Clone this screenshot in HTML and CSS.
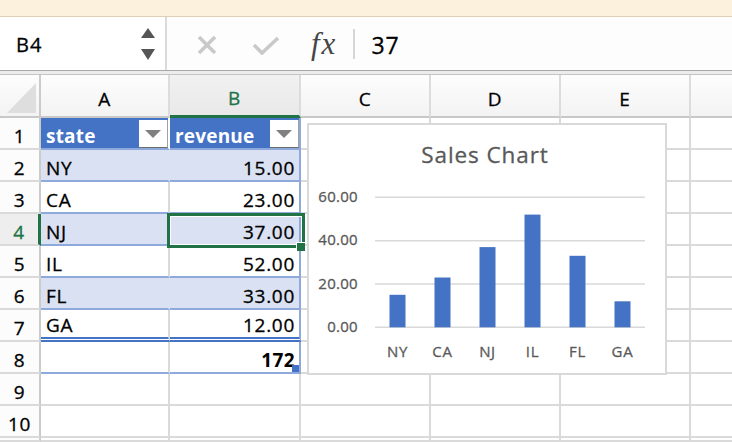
FILE: index.html
```html
<!DOCTYPE html>
<html lang="en">
<head>
    <meta charset="UTF-8">
    <title>Sales - Sheet1</title>
    <link rel="stylesheet" href="styles.css">
</head>
<body>
    <div class="banner"></div>

    <div class="formula-bar">
        <div class="name-box">
            <span class="name">B4</span>
            <svg class="spin" width="16" height="34" viewBox="0 0 16 34">
                <path d="M1 11 L8 1 L15 11 Z" fill="#555"/>
                <path d="M1 22 L15 22 L8 33 Z" fill="#555"/>
            </svg>
        </div>
        <svg class="icon-cancel" width="22" height="20" viewBox="0 0 22 20">
            <path d="M3 2 L19 18 M19 2 L3 18" stroke="#c9c9c9" stroke-width="3.6"/>
        </svg>
        <svg class="icon-enter" width="28" height="19" viewBox="0 0 28 19">
            <path d="M2 9 L10 17 L26 2" fill="none" stroke="#c9c9c9" stroke-width="3.6"/>
        </svg>
        <span class="fx">fx</span>
        <span class="fx-sep"></span>
        <span class="formula">37</span>
    </div>
    <div class="strip"></div>

    <div class="sheet">
        <div class="corner"><span class="corner-mark"></span></div>
        <div class="col-head">A</div>
        <div class="col-head active">B</div>
        <div class="col-head">C</div>
        <div class="col-head">D</div>
        <div class="col-head">E</div>
        <div class="col-head"></div>

        <div class="row-head">1</div>
        <div class="cell th">state<span class="filter"></span></div>
        <div class="cell th last">revenue<span class="filter"></span></div>
        <div class="cell"></div><div class="cell"></div><div class="cell"></div><div class="cell"></div>

        <div class="row-head">2</div>
        <div class="cell tb band">NY</div>
        <div class="cell tb band num last">15.00</div>
        <div class="cell"></div><div class="cell"></div><div class="cell"></div><div class="cell"></div>

        <div class="row-head">3</div>
        <div class="cell tb">CA</div>
        <div class="cell tb num last">23.00</div>
        <div class="cell"></div><div class="cell"></div><div class="cell"></div><div class="cell"></div>

        <div class="row-head active">4</div>
        <div class="cell tb band">NJ</div>
        <div class="cell tb band num last">37.00</div>
        <div class="cell"></div><div class="cell"></div><div class="cell"></div><div class="cell"></div>

        <div class="row-head">5</div>
        <div class="cell tb">IL</div>
        <div class="cell tb num last">52.00</div>
        <div class="cell"></div><div class="cell"></div><div class="cell"></div><div class="cell"></div>

        <div class="row-head">6</div>
        <div class="cell tb band">FL</div>
        <div class="cell tb band num last">33.00</div>
        <div class="cell"></div><div class="cell"></div><div class="cell"></div><div class="cell"></div>

        <div class="row-head">7</div>
        <div class="cell tb end">GA</div>
        <div class="cell tb end num last">12.00</div>
        <div class="cell"></div><div class="cell"></div><div class="cell"></div><div class="cell"></div>

        <div class="row-head">8</div>
        <div class="cell tb"></div>
        <div class="cell tb num last total">172<span class="resize"></span></div>
        <div class="cell"></div><div class="cell"></div><div class="cell"></div><div class="cell"></div>

        <div class="row-head">9</div>
        <div class="cell"></div><div class="cell"></div><div class="cell"></div><div class="cell"></div><div class="cell"></div><div class="cell"></div>

        <div class="row-head">10</div>
        <div class="cell"></div><div class="cell"></div><div class="cell"></div><div class="cell"></div><div class="cell"></div><div class="cell"></div>

        <!-- top edge of row 11 -->
        <div class="row-head"></div>
        <div class="cell"></div><div class="cell"></div><div class="cell"></div><div class="cell"></div><div class="cell"></div><div class="cell"></div>

        <!-- active cell B4 -->
        <div class="selection"></div>
        <div class="fill-handle"></div>

        <!-- floating chart -->
        <div class="chart">
            <svg width="356" height="248" viewBox="2 2 356 248">
                <text class="chart-title" x="178" y="40">Sales Chart</text>

                <g class="grid">
                    <line x1="68" y1="74.3" x2="338" y2="74.3"/>
                    <line x1="68" y1="117.7" x2="338" y2="117.7"/>
                    <line x1="68" y1="161" x2="338" y2="161"/>
                    <line x1="68" y1="204.3" x2="338" y2="204.3"/>
                </g>

                <g class="y-axis">
                    <text x="51" y="79">60.00</text>
                    <text x="51" y="122.4">40.00</text>
                    <text x="51" y="165.7">20.00</text>
                    <text x="51" y="209">0.00</text>
                </g>

                <g class="bars">
                    <rect x="82.5" y="171.8" width="16" height="32.5"/>
                    <rect x="127.5" y="154.5" width="16" height="49.8"/>
                    <rect x="172.5" y="124.1" width="16" height="80.2"/>
                    <rect x="217.5" y="91.6" width="16" height="112.7"/>
                    <rect x="262.5" y="132.8" width="16" height="71.5"/>
                    <rect x="307.5" y="178.3" width="16" height="26"/>
                </g>

                <g class="x-axis">
                    <text x="90.5" y="234">NY</text>
                    <text x="135.5" y="234">CA</text>
                    <text x="180.5" y="234">NJ</text>
                    <text x="225.5" y="234">IL</text>
                    <text x="270.5" y="234">FL</text>
                    <text x="315.5" y="234">GA</text>
                </g>
            </svg>
        </div>
    </div>
</body>
</html>
```

FILE: styles.css
```css
html, body {
    margin: 0;
    width: 732px;
    height: 442px;
    overflow: hidden;
    background: #fff;
    font-family: "Open Sans", "Liberation Sans", sans-serif;
    color: #000;
}

/* window banner */
.banner {
    height: 16px;
    background: #fbf1dd;
    border-bottom: 1px solid #ddd0b4;
}

/* formula bar */
.formula-bar {
    display: flex;
    align-items: center;
    height: 53px;
    background: #fdfdfd;
    border-bottom: 1px solid #a8a8a8;
}

.name-box {
    display: flex;
    align-items: center;
    box-sizing: border-box;
    width: 167px;
    height: 100%;
    padding: 0 9px 0 16px;
    background: #fff;
    border-right: 2px solid #dadada;
}

.name {
    flex: 1;
    font-size: 20px;
    letter-spacing: 1px;
    padding-top: 2px;
    -webkit-text-stroke: 0.3px #000;
}

.spin {
    margin-top: 1px;
}

.icon-cancel {
    margin-left: 29px;
    margin-top: 3px;
}

.icon-enter {
    margin-left: 34px;
    margin-top: 3px;
}

.fx {
    margin-left: 31px;
    font-family: "Liberation Serif", "DejaVu Serif", serif;
    font-style: italic;
    font-size: 31px;
    color: #454545;
    letter-spacing: 2px;
}

.fx-sep {
    width: 2px;
    height: 30px;
    margin-left: 16px;
    background: #d6d6d6;
}

.formula {
    margin-left: 16px;
    padding-top: 2px;
    font-size: 23px;
    letter-spacing: 1px;
    -webkit-text-stroke: 0.3px #000;
}

.strip {
    height: 3px;
    background: #ececec;
    border-bottom: 1px solid #c4c4c4;
}

/* sheet grid */
.sheet {
    position: relative;
    display: grid;
    grid-template-columns: 41px 129px 131px 130px 130px 130px 60px;
    grid-template-rows: 43px repeat(10, 32px) 4px;
    font-size: 19px;
    letter-spacing: 0.7px;
    -webkit-text-stroke: 0.3px currentColor;
}

.sheet > div {
    box-sizing: border-box;
}

.corner {
    display: flex;
    align-items: flex-end;
    justify-content: flex-end;
    padding: 0 3px 3px 0;
    background: linear-gradient(#fdfdfd, #f3f3f3);
    border-right: 2px solid #cbcbcb;
    border-bottom: 2px solid #c8c8c8;
}

.corner-mark {
    width: 29px;
    height: 30px;
    background: #dedede;
    clip-path: polygon(100% 0, 100% 100%, 0 100%);
}

.col-head {
    display: flex;
    align-items: center;
    justify-content: center;
    padding-top: 6px;
    line-height: 24px;
    background: linear-gradient(#fdfdfd, #f3f3f3);
    border-right: 2px solid #dcdcdc;
    border-bottom: 2px solid #c8c8c8;
}

.col-head.active {
    color: #217346;
    background: linear-gradient(#f1f1f1, #e9e9e9);
    border-bottom: 3px solid #217346;
}

.row-head {
    display: flex;
    align-items: flex-end;
    justify-content: center;
    line-height: 24px;
    background: #fcfcfc;
    border-right: 2px solid #cbcbcb;
    border-bottom: 2px solid #dadada;
}

.row-head.active {
    color: #217346;
    background: #eeeeee;
    border-right: 3px solid #217346;
}

.cell {
    position: relative;
    display: flex;
    align-items: flex-end;
    padding: 0 4px 0 5px;
    line-height: 24px;
    white-space: nowrap;
    border-right: 2px solid #dadada;
    border-bottom: 2px solid #dadada;
}

.num {
    justify-content: flex-end;
}

/* table styling */
.th {
    padding-right: 0;
    background: #4472c4;
    color: #fff;
    font-weight: 700;
    letter-spacing: 0.2px;
    -webkit-text-stroke: 0;
    border-right-color: #fff;
    border-bottom-color: #8ea9db;
}

.filter {
    position: relative;
    align-self: stretch;
    width: 28px;
    margin: 2px 0 0 auto;
    background: #fff;
    border-right: 1px solid #a0a0a0;
    border-bottom: 1px solid #6c6c6c;
}

.filter::after {
    content: "";
    position: absolute;
    left: 6px;
    top: 10px;
    border-left: 8px solid transparent;
    border-right: 8px solid transparent;
    border-top: 8px solid #808080;
}

.tb {
    border-bottom-color: #8ea9db;
}

.band {
    background: #d9e1f2;
    border-right-color: #d9e1f2;
}

.last {
    border-right-color: #8ea9db;
}

.end {
    border-bottom: 5px double #4472c4;
}

.total {
    font-weight: 700;
    letter-spacing: 0.4px;
    -webkit-text-stroke: 0;
}

.resize {
    position: absolute;
    right: 0;
    bottom: 0;
    width: 7px;
    height: 7px;
    background: #4472c4;
}

/* active cell */
.selection {
    position: absolute;
    left: 167px;
    top: 138px;
    width: 138px;
    height: 35px;
    border: 3px solid #217346;
    box-shadow: inset 0 0 0 1px #fff;
}

.fill-handle {
    position: absolute;
    left: 296px;
    top: 167px;
    width: 9px;
    height: 9px;
    background: #217346;
    border-left: 1px solid #fff;
    border-top: 1px solid #fff;
}

/* chart */
.chart {
    position: absolute;
    left: 307px;
    top: 48px;
    width: 360px;
    height: 252px;
    background: #fff;
    border: 2px solid #d9d9d9;
    -webkit-text-stroke: 0;
}

.chart svg {
    display: block;
    font-family: "Open Sans", "Liberation Sans", sans-serif;
}

.chart text {
    fill: #595959;
    stroke: #595959;
    stroke-width: 0.3;
}

.chart-title {
    font-size: 22.5px;
    text-anchor: middle;
    letter-spacing: 0.9px;
}

.grid line {
    stroke: #d9d9d9;
    stroke-width: 1.5;
}

.y-axis text {
    font-size: 15px;
    text-anchor: end;
    letter-spacing: 0.3px;
}

.x-axis text {
    font-size: 15px;
    text-anchor: middle;
}

.bars rect {
    fill: #4472c4;
}
```
